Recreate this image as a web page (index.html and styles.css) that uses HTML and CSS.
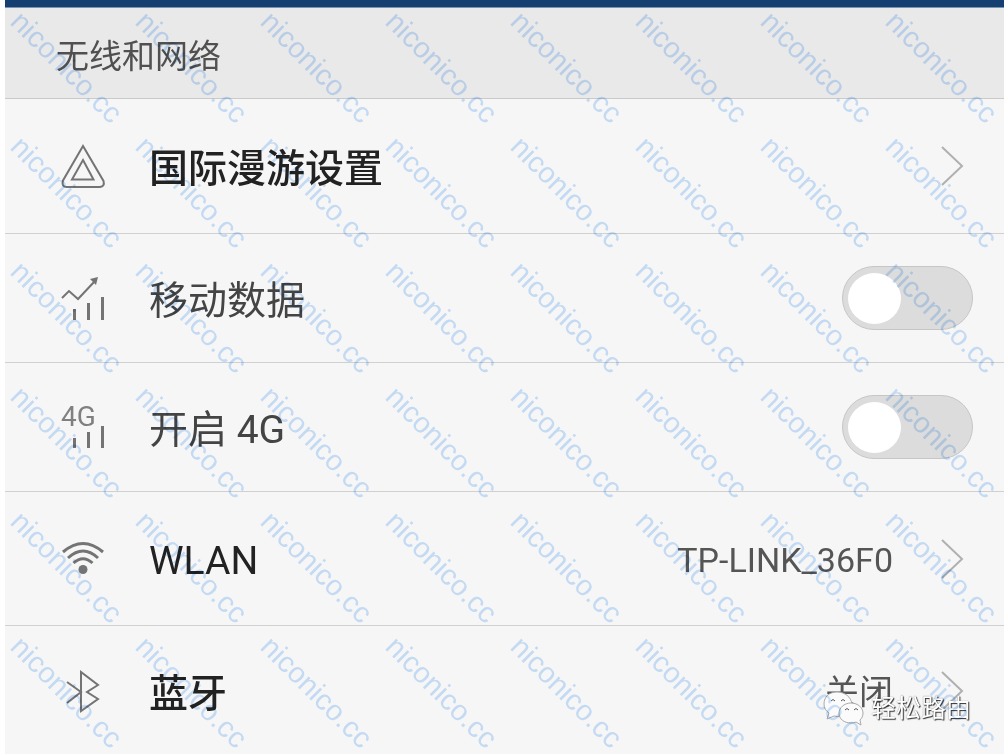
FILE: index.html
```html
<!DOCTYPE html>
<html lang="zh-CN">
<head>
<meta charset="utf-8">
<title>无线和网络</title>
<link rel="stylesheet" href="styles.css">
</head>
<body>
<main class="screen">
  <div class="status-bar"></div>
  <h1 class="section-title">无线和网络</h1>
  <ul class="settings">
    <li class="row row-tall">
      <svg class="icon" viewBox="0 0 48 48" aria-hidden="true"><path d="M24 4 4 38.500Q2 44.500 7.500 45H41Q46 44.500 44.500 39ZM24 18 34.500 37.500H13Z"/></svg>
      <a class="label strong medium" href="#roaming">国际漫游设置</a>
      <svg class="chevron" viewBox="0 0 24 40" aria-hidden="true"><path d="M2 1 22 20 2 39"/></svg>
    </li>
    <li class="row">
      <svg class="icon" viewBox="0 0 48 48" aria-hidden="true"><path d="M3 24 10 17 19 25 36 7"/><path class="fill" d="M31 5 39 3 37 11Z"/><path class="bars" d="M15.500 35V46M29.500 29V46M43.500 23V46"/></svg>
      <label class="label" for="data">移动数据</label>
      <input class="switch" id="data" type="checkbox" role="switch">
    </li>
    <li class="row">
      <svg class="icon" viewBox="0 0 48 48" aria-hidden="true"><text x="2" y="23">4G</text><path class="bars" d="M15.500 35V45M29.500 29V45M43.500 23V45"/></svg>
      <label class="label" for="lte">开启 4G</label>
      <input class="switch" id="lte" type="checkbox" role="switch">
    </li>
    <li class="row row-tall">
      <svg class="icon" viewBox="0 0 48 48" aria-hidden="true"><path class="bars" d="M4 17Q24 0 44 17M9 23Q24 9 39 23M14.500 28Q24 19.500 33.500 28"/><circle class="fill" cx="24" cy="34.500" r="4.500"/></svg>
      <a class="label strong" href="#wlan">WLAN</a>
      <span class="value">TP-LINK_36F0</span>
      <svg class="chevron" viewBox="0 0 24 40" aria-hidden="true"><path d="M2 1 22 20 2 39"/></svg>
    </li>
    <li class="row row-tall">
      <svg class="icon" viewBox="0 0 48 48" aria-hidden="true"><path d="M8 15 22 25 8 36M22 5V44L39 32 28 25 39 18Z"/></svg>
      <a class="label strong medium" href="#bluetooth">蓝牙</a>
      <span class="value">关闭</span>
      <svg class="chevron" viewBox="0 0 24 40" aria-hidden="true"><path d="M2 1 22 20 2 39"/></svg>
    </li>
  </ul>
  <div class="account">
    <svg class="chat" viewBox="0 0 42 36" aria-hidden="true"><path d="M14 1C6 1 1 6 1 13C1 17 3 20 6 22L4 28 11 25Q14 26 18 25L29 13C28 6 22 1 14 1Z"/><path d="M28 12C21 12 16 17 16 22C16 28 21 32 28 32Q31 32 33 31L38 34 37 29C39 27 40 25 40 22C40 17 35 12 28 12Z"/><path class="eyes" d="M8 10Q10 7 12 10M18 10Q20 7 22 10M22 19Q24 16 26 19M31 19Q33 16 35 19"/></svg>
    <span>轻松路由</span>
  </div>
  <div class="watermark" id="watermark" aria-hidden="true"></div>
</main>
<script src="watermark.js"></script>
</body>
</html>
```
FILE: watermark.js
```js
const layer = document.getElementById('watermark');
for (let i = 0; i < 48; i++) {
  const mark = document.createElement('span');
  mark.textContent = 'niconico.cc';
  layer.append(mark);
}
```
FILE: styles.css
```css
* { box-sizing: border-box; }
body {
  margin: 0;
  background: #fff;
  font-family: Roboto, "Noto Sans CJK SC", sans-serif;
  color: #444;
}
.screen {
  position: relative;
  min-height: 100vh;
  padding-left: 5px;
  overflow: hidden;
  background: linear-gradient(#f6f6f6, #f6f6f6) 5px 0 no-repeat;
}
.status-bar {
  height: 8px;
  background: #153f70;
  border-bottom: 1px solid #7892b0;
}
.section-title {
  margin: 0;
  padding: 29px 51px 21px;
  background: #e9e9e9;
  border-bottom: 1px solid #cacaca;
  font-size: 33px;
  line-height: 40px;
  font-weight: 400;
  color: #505050;
}
.settings {
  margin: 0;
  padding: 0;
  list-style: none;
}
.row {
  display: flex;
  align-items: center;
  height: 129px;
  padding: 0 31px 0 54px;
  border-bottom: 1px solid #d0d0d0;
}
.row-tall {
  height: 134px;
  padding-right: 40px;
}
.row:first-child { height: 135px; }
.row:last-child {
  height: 130px;
  border-bottom: 0;
}
.icon {
  flex: none;
  width: 48px;
  height: 48px;
  margin-right: 42px;
  overflow: visible;
  fill: none;
  stroke: #747474;
  stroke-width: 2;
}
.icon .fill { fill: #747474; stroke: none; }
.icon .bars { stroke-width: 3; }
.icon text {
  fill: #808080;
  stroke: none;
  font-size: 28px;
}
.label {
  flex: 1;
  padding-top: 5px;
  font-size: 39px;
  line-height: 48px;
  color: #444;
  text-decoration: none;
}
.strong { color: #222; }
.medium { font-weight: 500; }
.value {
  margin-right: 47px;
  padding-top: 2px;
  font-size: 34px;
  line-height: 40px;
  color: #555;
}
.chevron {
  flex: none;
  width: 24px;
  height: 40px;
  fill: none;
  stroke: #b0b0b0;
  stroke-width: 2;
}
.switch {
  appearance: none;
  display: flex;
  align-items: center;
  width: 131px;
  height: 64px;
  margin: 0;
  padding: 0 5px;
  border: 1px solid #c6c6c6;
  border-radius: 32px;
  background: #dcdcdc;
}
.switch::before {
  content: "";
  width: 53px;
  height: 51px;
  border-radius: 50%;
  background: #fff;
}
.switch:checked { justify-content: flex-end; }
.account {
  position: absolute;
  right: 33px;
  bottom: 29px;
  display: flex;
  align-items: center;
  gap: 6px;
  font-size: 25px;
  line-height: 30px;
  color: #fff;
  text-shadow: 1px 1px 1px #333, 0 0 1px #555;
}
.chat {
  width: 42px;
  height: 36px;
  fill: #fbfbfb;
  stroke: #aaa;
  stroke-width: 1;
}
.chat .eyes { fill: none; stroke: #555; }
.watermark {
  position: absolute;
  top: 4px;
  left: 4px;
  display: grid;
  grid-template-columns: repeat(8, 125px);
  grid-auto-rows: 125px;
  place-items: center;
  mix-blend-mode: multiply;
  pointer-events: none;
  font-family: "Liberation Sans", sans-serif;
  font-size: 29px;
  line-height: 32px;
  color: #cbe2fc;
}
.watermark span { transform: rotate(45deg); }
```
